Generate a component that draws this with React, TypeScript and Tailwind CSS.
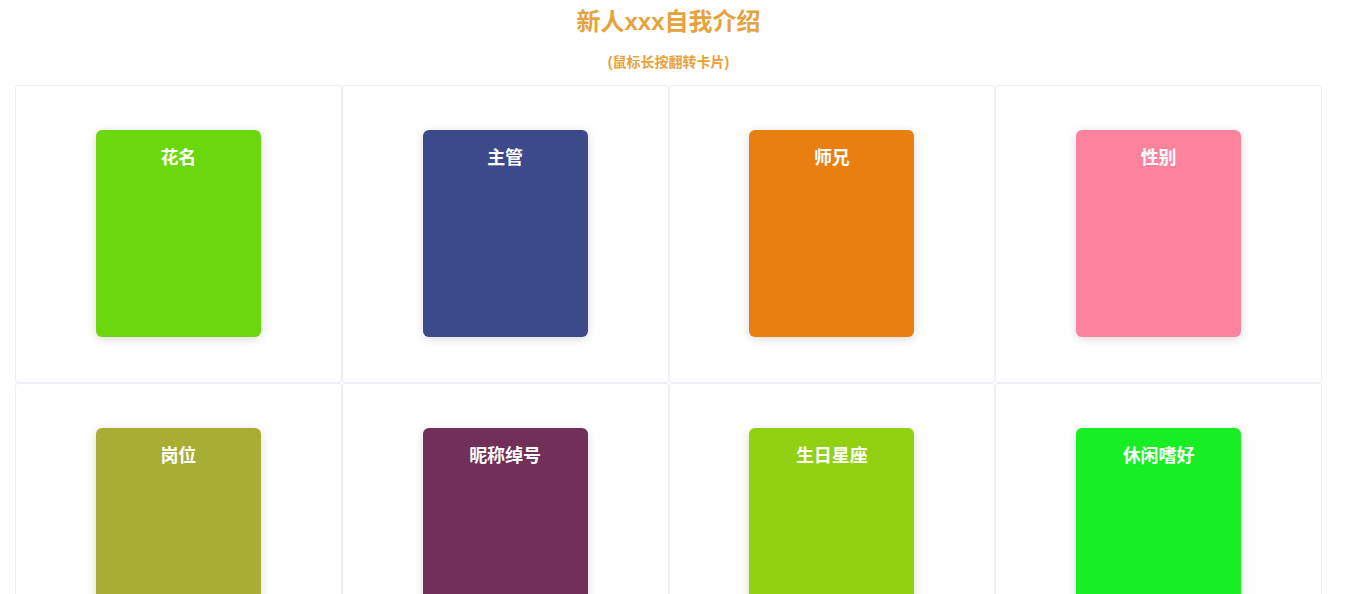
const cards = [
  { title: "花名", color: "bg-[#6bd80e]" },
  { title: "主管", color: "bg-[#3c4a8c]" },
  { title: "师兄", color: "bg-[#e87f10]" },
  { title: "性别", color: "bg-[#fd839c]" },
  { title: "岗位", color: "bg-[#a8ad33]" },
  { title: "昵称绰号", color: "bg-[#722f57]" },
  { title: "生日星座", color: "bg-[#91d112]" },
  { title: "休闲嗜好", color: "bg-[#17ef24]" },
];

const App = () => {
  return (
    <div
      className="w-[1307px] ml-[15px] bg-white"
      style={{ fontFamily: '"Liberation Sans", "Noto Sans CJK SC", sans-serif' }}
    >
      <h1 className="mt-[6px] text-center text-[24px] leading-[32px] font-bold text-[#e6a23c]">
        新人xxx自我介绍
      </h1>
      <p className="mt-[14px] mb-[13px] text-center text-[14px] leading-[20px] font-bold text-[#e6a23c]">
        (鼠标长按翻转卡片)
      </p>
      <div className="grid grid-cols-4">
        {cards.map((card) => (
          <div
            key={card.title}
            className="h-[298px] pt-[44px] border border-[#ebeef5] rounded-[3px] flex justify-center"
          >
            <div
              className={`w-[165px] h-[207px] rounded-md shadow-[0_2px_10px_rgba(0,0,0,0.15)] ${card.color}`}
            >
              <div className="pt-[18px] text-center text-[18px] leading-[20px] font-bold text-white">
                {card.title}
              </div>
            </div>
          </div>
        ))}
      </div>
    </div>
  );
};

export default App;
